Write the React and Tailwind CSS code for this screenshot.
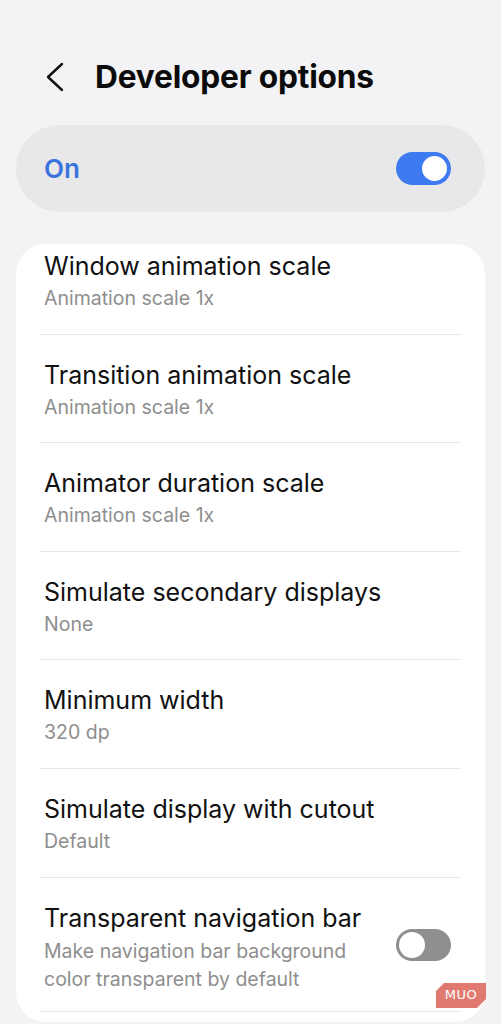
import React from 'react';

const rows = [
  { title: 'Window animation scale', sub: 'Animation scale 1x' },
  { title: 'Transition animation scale', sub: 'Animation scale 1x' },
  { title: 'Animator duration scale', sub: 'Animation scale 1x' },
  { title: 'Simulate secondary displays', sub: 'None' },
  { title: 'Minimum width', sub: '320 dp' },
  { title: 'Simulate display with cutout', sub: 'Default' },
];

const Toggle = ({ on }) =>
  on ? (
    <div className="w-[55px] h-[33px] rounded-full bg-[#3e7bf0] flex items-center justify-end pr-[4px]">
      <div className="w-[25px] h-[25px] rounded-full bg-white" />
    </div>
  ) : (
    <div className="w-[55px] h-[32px] rounded-full bg-[#8f8f8f] flex items-center pl-[3px]">
      <div className="w-[26px] h-[26px] rounded-full bg-white" />
    </div>
  );

const App = () => {
  return (
    <div className="min-h-[1024px] bg-[#f3f3f5] font-['Inter',sans-serif] overflow-hidden">
      {/* Header */}
      <div className="flex items-center h-[77px] pt-[38px] box-content">
        <svg className="ml-[45px] w-[20px] h-[30px]" viewBox="0 0 20 30" fill="none">
          <path d="M17 2 L3 15 L17 28" stroke="#111" strokeWidth="2.4" strokeLinecap="round" strokeLinejoin="round" />
        </svg>
        <h1 className="ml-[30px] text-[31.7px] font-bold text-[#0b0b0b] tracking-[-0.2px]">Developer options</h1>
      </div>

      {/* Master switch */}
      <div className="mx-[16px] mt-[10px] h-[87px] rounded-full bg-[#e8e8ea] flex items-center justify-between pl-[28px] pr-[34px]">
        <span className="text-[26px] font-semibold text-[#3a74dc]">On</span>
        <Toggle on />
      </div>

      {/* Settings card */}
      <div className="relative mx-[16px] mt-[32px] bg-white rounded-[30px] px-[24px] pb-[10px]">
        {rows.map((r, i) => (
          <div
            key={r.title}
            className={`border-b border-[#e6e6e8] pb-[22.6px] ${i === 0 ? 'pt-[7px]' : 'pt-[25px]'}`}
          >
            <div className="px-[4px] text-[25px] leading-[30px] text-[#111]">{r.title}</div>
            <div className="px-[4px] mt-[4px] text-[19.5px] leading-[26px] text-[#8e8e8e]">{r.sub}</div>
          </div>
        ))}

        <div className="border-b border-[#e6e6e8] pt-[25px] pb-[18px] flex items-start">
          <div className="px-[4px] w-[330px]">
            <div className="text-[25px] leading-[30px] text-[#111]">Transparent navigation bar</div>
            <div className="mt-[4px] text-[19.5px] leading-[28px] text-[#8e8e8e]">
              Make navigation bar background color transparent by default
            </div>
          </div>
          <div className="ml-auto mr-[10px] mt-[26px]">
            <Toggle />
          </div>
        </div>

        {/* MUO watermark */}
        <div className="absolute right-[-1px] bottom-[14px] w-[50px] h-[25px]">
          <svg className="absolute inset-0" width="50" height="25" viewBox="0 0 50 25">
            <polygon points="8,0 50,0 50,16 41,25 0,25 0,8" fill="#e07a70" />
            <path d="M42 25 L50 17" stroke="#fff" strokeWidth="1" />
          </svg>
          <span className="relative flex items-center justify-center h-full text-[13px] text-white font-['DejaVu_Sans',sans-serif] tracking-[0.5px]">MUO</span>
        </div>
      </div>
    </div>
  );
};

export default App;
